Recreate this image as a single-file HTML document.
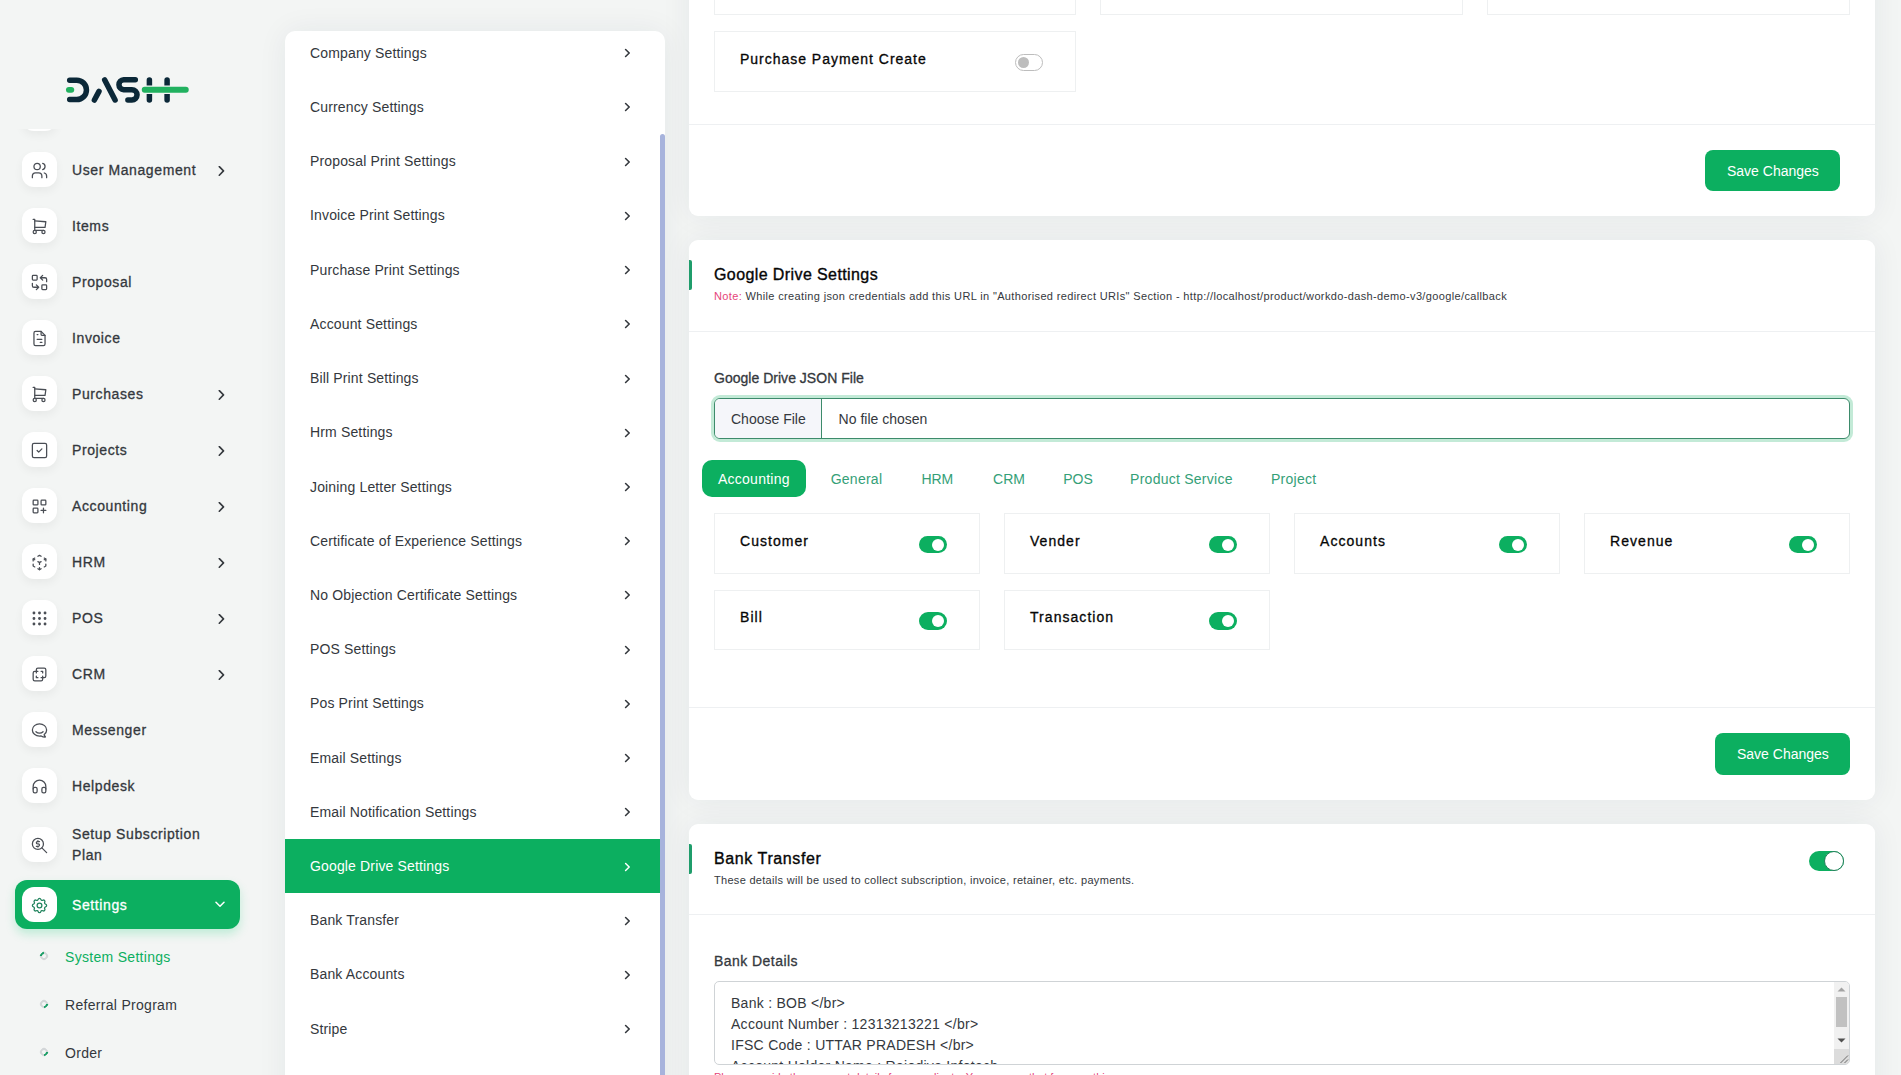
<!DOCTYPE html>
<html><head><meta charset="utf-8">
<style>
*{box-sizing:border-box;margin:0;padding:0}
html,body{width:1901px;height:1075px;overflow:hidden}
body{position:relative;background:#f3f5f4;font-family:"Liberation Sans",sans-serif;color:#293240;font-size:14px}
.abs{position:absolute}
/* sidebar */
.side{position:absolute;left:0;top:0;width:265px;height:1075px}
.mi{position:absolute;left:22px;width:240px;height:35px}
.ib{position:absolute;left:0;top:0;width:35px;height:35px;background:#fff;border-radius:12px;box-shadow:0 4px 10px rgba(0,0,0,0.05)}
.ib svg{position:absolute;left:8px;top:9.3px;width:19px;height:19px}
.mt{position:absolute;left:50px;top:0.8px;line-height:35px;font-size:14px;color:#34383d;-webkit-text-stroke:0.3px currentColor;letter-spacing:0.6px;white-space:nowrap}
.chev{position:absolute;left:196px;top:13.8px;width:7px;height:10px}
.sub{position:absolute;left:65px;font-size:14px;line-height:22px;color:#293240;letter-spacing:0.3px;white-space:nowrap}
.dot{position:absolute;left:40px;width:8px;height:8px;border-radius:50%;border:2px solid #d3d6d8;border-bottom-color:#1a9e66;transform:rotate(-45deg)}
/* middle card */
.mid{position:absolute;left:285px;top:31px;width:380px;height:1100px;background:#fff;border-radius:10px 10px 0 0;overflow:hidden;box-shadow:0 0 30px rgba(20,40,70,0.065)}
.it{position:absolute;left:0;width:375px;height:53.5px;line-height:55.5px;padding-left:25px;font-size:14px;color:#34383d;letter-spacing:0.15px;white-space:nowrap}
.it.act{background:#0caf60;color:#fff}
.it svg{position:absolute;left:338.8px;top:22.5px;width:7px;height:10px}
.sb{position:absolute;left:375px;top:103px;width:5px;height:1000px;background:#a7b3dc;border-radius:3px}
/* right cards */
.card{position:absolute;left:689px;width:1186px;background:#fff;border-radius:9px;box-shadow:0 0 30px rgba(20,40,70,0.065)}
.hr{position:absolute;left:0;width:100%;height:1px;background:#eef0f2}
.box{position:absolute;border:1px solid #eef0f1;background:#fff}
.lbl{position:absolute;font-weight:700;color:#060606;letter-spacing:0.5px;white-space:nowrap;font-size:14px}
.btn{position:absolute;background:#0caf60;color:#fff;border-radius:8px;text-align:center;font-size:14px;white-space:nowrap}
.tg{position:absolute;width:28px;height:17px;border-radius:9px;background:#0caf60}
.tg::after{content:"";position:absolute;right:3px;top:2.5px;width:12px;height:12px;border-radius:50%;background:#fff}
.accent{position:absolute;left:0;width:3px;height:30px;background:#1e9e6a;border-radius:0 2px 2px 0}
.ttl{position:absolute;left:24px;font-size:16px;font-weight:700;color:#060606;white-space:nowrap;letter-spacing:0.2px}
</style></head><body>
<!-- SIDEBAR -->

<div class="side">
<div class="abs" style="left:22px;top:96px;width:35px;height:35px;background:#fff;border-radius:12px;box-shadow:0 4px 10px rgba(0,0,0,0.05)"></div>
<div class="abs" style="left:0;top:0;width:265px;height:129px;background:#f3f5f4"></div>
<svg class="abs" style="left:0;top:0" width="265" height="130" viewBox="0 0 265 130">
<g fill="none" stroke-linecap="round" stroke-width="5.5">
<path d="M69.7 80.2 H76.75 A9.65 9.65 0 0 1 76.75 99.6 H69.7" stroke="#0b2838"/>
<path d="M68.9 89.85 H71.3" stroke="#21b15f" stroke-width="5.9"/>
<path d="M104.7 79.9 L115.1 100" stroke="#0b2838"/>
<path d="M99 91.4 L94.4 100" stroke="#0b2838"/>
<path d="M135.3 79.7 H123.7 A4.98 4.98 0 0 0 123.7 89.65 H131.9 A5.16 5.16 0 0 1 131.9 99.97 H127.9" stroke="#0b2838"/>
<path d="M149.4 79.9 V99.9 M167.1 79.9 V99.9" stroke="#0b2838"/>
<path d="M144.7 89.8 H185.8" stroke="#f3f5f4" stroke-width="8.6"/>
<path d="M144.7 89.8 H185.8" stroke="#21b15f" stroke-width="5.9"/>
</g>
</svg>
<div class="mi" style="top:152px"><div class="ib"><svg viewBox="0 0 24 24" fill="none" stroke="#4a4e55" stroke-width="1.6" stroke-linecap="round" stroke-linejoin="round" style="color:#454b58"><circle cx="9" cy="7" r="4"/><path d="M3 21v-2a4 4 0 0 1 4-4h4a4 4 0 0 1 4 4v2"/><path d="M16 3.13a4 4 0 0 1 0 7.75"/><path d="M21 21v-2a4 4 0 0 0-3-3.85"/></svg></div><div class="mt">User Management</div><svg class="chev" viewBox="0 0 7 10"><path d="M1.3 0.6 L5.5 4.9 L1.3 9.2" fill="none" stroke="#34383d" stroke-width="1.6" stroke-linecap="round" stroke-linejoin="round"/></svg></div>
<div class="mi" style="top:208px"><div class="ib"><svg viewBox="0 0 24 24" fill="none" stroke="#4a4e55" stroke-width="1.6" stroke-linecap="round" stroke-linejoin="round" style="color:#454b58"><circle cx="6" cy="19" r="2"/><circle cx="17" cy="19" r="2"/><path d="M17 17h-11v-14h-2"/><path d="M6 5l14 1l-1 7h-13"/></svg></div><div class="mt">Items</div></div>
<div class="mi" style="top:264px"><div class="ib"><svg viewBox="0 0 24 24" fill="none" stroke="#4a4e55" stroke-width="1.6" stroke-linecap="round" stroke-linejoin="round" style="color:#454b58"><rect x="3" y="3" width="6" height="6" rx="1"/><rect x="15" y="15" width="6" height="6" rx="1"/><path d="M21 11v-3a2 2 0 0 0-2-2h-6l3 3m0-6l-3 3"/><path d="M3 13v3a2 2 0 0 0 2 2h6l-3-3m0 6l3-3"/></svg></div><div class="mt">Proposal</div></div>
<div class="mi" style="top:320px"><div class="ib"><svg viewBox="0 0 24 24" fill="none" stroke="#4a4e55" stroke-width="1.6" stroke-linecap="round" stroke-linejoin="round" style="color:#454b58"><path d="M14 3v4a1 1 0 0 0 1 1h4"/><path d="M17 21h-10a2 2 0 0 1-2-2v-14a2 2 0 0 1 2-2h7l5 5v11a2 2 0 0 1-2 2z"/><path d="M9 7h1"/><path d="M9 13h6"/><path d="M13 17h2"/></svg></div><div class="mt">Invoice</div></div>
<div class="mi" style="top:376px"><div class="ib"><svg viewBox="0 0 24 24" fill="none" stroke="#4a4e55" stroke-width="1.6" stroke-linecap="round" stroke-linejoin="round" style="color:#454b58"><circle cx="6" cy="19" r="2"/><circle cx="17" cy="19" r="2"/><path d="M17 17h-11v-14h-2"/><path d="M6 5l14 1l-1 7h-13"/></svg></div><div class="mt">Purchases</div><svg class="chev" viewBox="0 0 7 10"><path d="M1.3 0.6 L5.5 4.9 L1.3 9.2" fill="none" stroke="#34383d" stroke-width="1.6" stroke-linecap="round" stroke-linejoin="round"/></svg></div>
<div class="mi" style="top:432px"><div class="ib"><svg viewBox="0 0 24 24" fill="none" stroke="#4a4e55" stroke-width="1.6" stroke-linecap="round" stroke-linejoin="round" style="color:#454b58"><rect x="3" y="3" width="18" height="18" rx="2"/><path d="M9 12l2 2l4-4"/></svg></div><div class="mt">Projects</div><svg class="chev" viewBox="0 0 7 10"><path d="M1.3 0.6 L5.5 4.9 L1.3 9.2" fill="none" stroke="#34383d" stroke-width="1.6" stroke-linecap="round" stroke-linejoin="round"/></svg></div>
<div class="mi" style="top:488px"><div class="ib"><svg viewBox="0 0 24 24" fill="none" stroke="#4a4e55" stroke-width="1.6" stroke-linecap="round" stroke-linejoin="round" style="color:#454b58"><rect x="4" y="4" width="6" height="6" rx="1"/><rect x="14" y="4" width="6" height="6" rx="1"/><rect x="4" y="14" width="6" height="6" rx="1"/><path d="M14 17h6m-3-3v6"/></svg></div><div class="mt">Accounting</div><svg class="chev" viewBox="0 0 7 10"><path d="M1.3 0.6 L5.5 4.9 L1.3 9.2" fill="none" stroke="#34383d" stroke-width="1.6" stroke-linecap="round" stroke-linejoin="round"/></svg></div>
<div class="mi" style="top:544px"><div class="ib"><svg viewBox="0 0 24 24" fill="none" stroke="#4a4e55" stroke-width="1.6" stroke-linecap="round" stroke-linejoin="round" style="color:#454b58"><path d="M6 17.6l-2-1.1v-2.5"/><path d="M4 10v-2.5l2-1.1"/><path d="M10 4.1l2-1.1l2 1.1"/><path d="M18 6.4l2 1.1v2.5"/><path d="M20 14v2.5l-2 1.12"/><path d="M14 19.9l-2 1.1l-2-1.1"/><path d="M12 12l2-1.1"/><path d="M18 8.6l2-1.1"/><path d="M12 12v2.5"/><path d="M12 18.5v2.5"/><path d="M12 12l-2-1.12"/><path d="M6 8.6l-2-1.1"/></svg></div><div class="mt">HRM</div><svg class="chev" viewBox="0 0 7 10"><path d="M1.3 0.6 L5.5 4.9 L1.3 9.2" fill="none" stroke="#34383d" stroke-width="1.6" stroke-linecap="round" stroke-linejoin="round"/></svg></div>
<div class="mi" style="top:600px"><div class="ib"><svg viewBox="0 0 24 24" fill="none" stroke="#4a4e55" stroke-width="1.6" stroke-linecap="round" stroke-linejoin="round" style="color:#454b58"><circle cx="5" cy="5" r="1" fill="currentColor"/><circle cx="12" cy="5" r="1" fill="currentColor"/><circle cx="19" cy="5" r="1" fill="currentColor"/><circle cx="5" cy="12" r="1" fill="currentColor"/><circle cx="12" cy="12" r="1" fill="currentColor"/><circle cx="19" cy="12" r="1" fill="currentColor"/><circle cx="5" cy="19" r="1" fill="currentColor"/><circle cx="12" cy="19" r="1" fill="currentColor"/><circle cx="19" cy="19" r="1" fill="currentColor"/></svg></div><div class="mt">POS</div><svg class="chev" viewBox="0 0 7 10"><path d="M1.3 0.6 L5.5 4.9 L1.3 9.2" fill="none" stroke="#34383d" stroke-width="1.6" stroke-linecap="round" stroke-linejoin="round"/></svg></div>
<div class="mi" style="top:656px"><div class="ib"><svg viewBox="0 0 24 24" fill="none" stroke="#4a4e55" stroke-width="1.6" stroke-linecap="round" stroke-linejoin="round" style="color:#454b58"><path d="M16 16v2a2 2 0 0 1-2 2h-8a2 2 0 0 1-2-2v-8a2 2 0 0 1 2-2h2v-2a2 2 0 0 1 2-2h8a2 2 0 0 1 2 2v8a2 2 0 0 1-2 2h-2"/><path d="M10 8l-2 0l0 2"/><path d="M8 14l0 2l2 0"/><path d="M14 8l2 0l0 2"/><path d="M16 14l0 2l-2 0"/></svg></div><div class="mt">CRM</div><svg class="chev" viewBox="0 0 7 10"><path d="M1.3 0.6 L5.5 4.9 L1.3 9.2" fill="none" stroke="#34383d" stroke-width="1.6" stroke-linecap="round" stroke-linejoin="round"/></svg></div>
<div class="mi" style="top:712px"><div class="ib"><svg viewBox="0 0 24 24" fill="none" stroke="#4a4e55" stroke-width="1.6" stroke-linecap="round" stroke-linejoin="round" style="color:#454b58"><path d="M17.802 17.292s.077-.055.2-.149c1.843-1.425 3-3.49 3-5.789c0-4.286-4.03-7.764-9-7.764c-4.97 0-9 3.478-9 7.764c0 4.288 4.03 7.646 9 7.646c.424 0 1.12-.028 2.088-.084c1.262.82 3.104 1.493 4.716 1.493c.499 0 .734-.41.414-.828c-.486-.596-1.156-1.551-1.416-2.29z"/><path d="M7.5 13.5c2.5 2.5 6.5 2.5 9 0"/></svg></div><div class="mt">Messenger</div></div>
<div class="mi" style="top:768px"><div class="ib"><svg viewBox="0 0 24 24" fill="none" stroke="#4a4e55" stroke-width="1.6" stroke-linecap="round" stroke-linejoin="round" style="color:#454b58"><rect x="4" y="13" width="5" height="7" rx="2"/><rect x="15" y="13" width="5" height="7" rx="2"/><path d="M4 15v-3a8 8 0 0 1 16 0v3"/></svg></div><div class="mt">Helpdesk</div></div>
<div class="mi" style="top:827px"><div class="ib"><svg viewBox="0 0 24 24" fill="none" stroke="#4a4e55" stroke-width="1.6" stroke-linecap="round" stroke-linejoin="round" style="color:#454b58"><circle cx="10" cy="10" r="7"/><path d="M21 21l-6-6"/><path d="M12 7h-2.5a1.5 1.5 0 0 0 0 3h1a1.5 1.5 0 0 1 0 3h-2.5"/><path d="M10 13v1m0-8v1"/></svg></div><div class="mt" style="line-height:21px;top:-3px">Setup Subscription<br>Plan</div></div>
<div class="abs" style="left:15px;top:880px;width:225px;height:49px;background:#0caf60;border-radius:12px;box-shadow:0 5px 10px rgba(40,210,130,0.25)"></div>
<div class="mi" style="top:887px"><div class="ib" style="box-shadow:none"><svg viewBox="0 0 24 24" fill="none" stroke="#23855f" stroke-width="1.6" stroke-linecap="round" stroke-linejoin="round" style="color:#23855f"><path d="M10.325 4.317c.426-1.756 2.924-1.756 3.35 0a1.724 1.724 0 0 0 2.573 1.066c1.543-.94 3.31.826 2.37 2.37a1.724 1.724 0 0 0 1.065 2.572c1.756.426 1.756 2.924 0 3.35a1.724 1.724 0 0 0-1.066 2.573c.94 1.543-.826 3.31-2.37 2.37a1.724 1.724 0 0 0-2.572 1.065c-.426 1.756-2.924 1.756-3.35 0a1.724 1.724 0 0 0-2.573-1.066c-1.543.94-3.31-.826-2.37-2.37a1.724 1.724 0 0 0-1.065-2.572c-1.756-.426-1.756-2.924 0-3.35a1.724 1.724 0 0 0 1.066-2.573c-.94-1.543.826-3.31 2.37-2.37c1 .608 2.296.07 2.572-1.065z"/><circle cx="12" cy="12" r="3"/></svg></div><div class="mt" style="color:#fff">Settings</div><svg class="chev" style="left:193px;top:14px;width:10px;height:7px" viewBox="0 0 10 7"><path d="M1 1.2 L5 5.2 L9 1.2" fill="none" stroke="#fff" stroke-width="1.5" stroke-linecap="round" stroke-linejoin="round"/></svg></div>
<div class="dot" style="transform:rotate(135deg);top:952px"></div><div class="sub" style="top:946px;color:#0caf60">System Settings</div>
<div class="dot" style="top:1000px"></div><div class="sub" style="top:994px;color:#34383d">Referral Program</div>
<div class="dot" style="top:1048px"></div><div class="sub" style="top:1042px;color:#34383d">Order</div>
</div>
<!-- MIDDLE -->
<div class="mid">
<div class="it" style="top:-5.25px">Company Settings<svg viewBox="0 0 7 10"><path d="M1.6 1.5 L5.2 5 L1.6 8.5" fill="none" stroke="#34383d" stroke-width="1.6" stroke-linecap="round" stroke-linejoin="round"/></svg></div>
<div class="it" style="top:48.97px">Currency Settings<svg viewBox="0 0 7 10"><path d="M1.6 1.5 L5.2 5 L1.6 8.5" fill="none" stroke="#34383d" stroke-width="1.6" stroke-linecap="round" stroke-linejoin="round"/></svg></div>
<div class="it" style="top:103.19px">Proposal Print Settings<svg viewBox="0 0 7 10"><path d="M1.6 1.5 L5.2 5 L1.6 8.5" fill="none" stroke="#34383d" stroke-width="1.6" stroke-linecap="round" stroke-linejoin="round"/></svg></div>
<div class="it" style="top:157.41px">Invoice Print Settings<svg viewBox="0 0 7 10"><path d="M1.6 1.5 L5.2 5 L1.6 8.5" fill="none" stroke="#34383d" stroke-width="1.6" stroke-linecap="round" stroke-linejoin="round"/></svg></div>
<div class="it" style="top:211.63px">Purchase Print Settings<svg viewBox="0 0 7 10"><path d="M1.6 1.5 L5.2 5 L1.6 8.5" fill="none" stroke="#34383d" stroke-width="1.6" stroke-linecap="round" stroke-linejoin="round"/></svg></div>
<div class="it" style="top:265.85px">Account Settings<svg viewBox="0 0 7 10"><path d="M1.6 1.5 L5.2 5 L1.6 8.5" fill="none" stroke="#34383d" stroke-width="1.6" stroke-linecap="round" stroke-linejoin="round"/></svg></div>
<div class="it" style="top:320.07px">Bill Print Settings<svg viewBox="0 0 7 10"><path d="M1.6 1.5 L5.2 5 L1.6 8.5" fill="none" stroke="#34383d" stroke-width="1.6" stroke-linecap="round" stroke-linejoin="round"/></svg></div>
<div class="it" style="top:374.29px">Hrm Settings<svg viewBox="0 0 7 10"><path d="M1.6 1.5 L5.2 5 L1.6 8.5" fill="none" stroke="#34383d" stroke-width="1.6" stroke-linecap="round" stroke-linejoin="round"/></svg></div>
<div class="it" style="top:428.51px">Joining Letter Settings<svg viewBox="0 0 7 10"><path d="M1.6 1.5 L5.2 5 L1.6 8.5" fill="none" stroke="#34383d" stroke-width="1.6" stroke-linecap="round" stroke-linejoin="round"/></svg></div>
<div class="it" style="top:482.73px">Certificate of Experience Settings<svg viewBox="0 0 7 10"><path d="M1.6 1.5 L5.2 5 L1.6 8.5" fill="none" stroke="#34383d" stroke-width="1.6" stroke-linecap="round" stroke-linejoin="round"/></svg></div>
<div class="it" style="top:536.95px">No Objection Certificate Settings<svg viewBox="0 0 7 10"><path d="M1.6 1.5 L5.2 5 L1.6 8.5" fill="none" stroke="#34383d" stroke-width="1.6" stroke-linecap="round" stroke-linejoin="round"/></svg></div>
<div class="it" style="top:591.17px">POS Settings<svg viewBox="0 0 7 10"><path d="M1.6 1.5 L5.2 5 L1.6 8.5" fill="none" stroke="#34383d" stroke-width="1.6" stroke-linecap="round" stroke-linejoin="round"/></svg></div>
<div class="it" style="top:645.39px">Pos Print Settings<svg viewBox="0 0 7 10"><path d="M1.6 1.5 L5.2 5 L1.6 8.5" fill="none" stroke="#34383d" stroke-width="1.6" stroke-linecap="round" stroke-linejoin="round"/></svg></div>
<div class="it" style="top:699.61px">Email Settings<svg viewBox="0 0 7 10"><path d="M1.6 1.5 L5.2 5 L1.6 8.5" fill="none" stroke="#34383d" stroke-width="1.6" stroke-linecap="round" stroke-linejoin="round"/></svg></div>
<div class="it" style="top:753.83px">Email Notification Settings<svg viewBox="0 0 7 10"><path d="M1.6 1.5 L5.2 5 L1.6 8.5" fill="none" stroke="#34383d" stroke-width="1.6" stroke-linecap="round" stroke-linejoin="round"/></svg></div>
<div class="it act" style="top:808.05px">Google Drive Settings<svg viewBox="0 0 7 10"><path d="M1.6 1.5 L5.2 5 L1.6 8.5" fill="none" stroke="#fff" stroke-width="1.5" stroke-linecap="round" stroke-linejoin="round"/></svg></div>
<div class="it" style="top:862.27px">Bank Transfer<svg viewBox="0 0 7 10"><path d="M1.6 1.5 L5.2 5 L1.6 8.5" fill="none" stroke="#34383d" stroke-width="1.6" stroke-linecap="round" stroke-linejoin="round"/></svg></div>
<div class="it" style="top:916.49px">Bank Accounts<svg viewBox="0 0 7 10"><path d="M1.6 1.5 L5.2 5 L1.6 8.5" fill="none" stroke="#34383d" stroke-width="1.6" stroke-linecap="round" stroke-linejoin="round"/></svg></div>
<div class="it" style="top:970.71px">Stripe<svg viewBox="0 0 7 10"><path d="M1.6 1.5 L5.2 5 L1.6 8.5" fill="none" stroke="#34383d" stroke-width="1.6" stroke-linecap="round" stroke-linejoin="round"/></svg></div>
<div class="it" style="top:1024.93px">Paypal<svg viewBox="0 0 7 10"><path d="M1.6 1.5 L5.2 5 L1.6 8.5" fill="none" stroke="#34383d" stroke-width="1.6" stroke-linecap="round" stroke-linejoin="round"/></svg></div>
<div class="sb"></div>
</div>
<!-- RIGHT -->
<div class="card" style="top:-300px;height:516px"></div>
<div class="box" style="left:714px;top:-50px;width:362px;height:65px"></div>
<div class="box" style="left:1100px;top:-50px;width:363px;height:65px"></div>
<div class="box" style="left:1487px;top:-50px;width:363px;height:65px"></div>
<div class="box" style="left:714px;top:31px;width:362px;height:61px"></div>
<div class="abs" style="left:740px;top:48.65px;line-height:20px;font-size:14px;-webkit-text-stroke:0.3px currentColor;color:#060606;letter-spacing:0.98px;white-space:nowrap;">Purchase Payment Create</div>
<div class="abs" style="left:1015px;top:54px;width:28px;height:17px;border-radius:9px;border:1px solid #bdbdbd;background:#fff"><div class="abs" style="left:2px;top:2px;width:11px;height:11px;border-radius:50%;background:#bdbdbd"></div></div>
<div class="abs" style="left:689px;top:124px;width:1186px;height:1px;background:#eef0f2"></div>
<div class="btn" style="left:1705px;top:150px;width:135px;height:41px"></div>
<div class="abs" style="left:1727px;top:160.75px;line-height:20px;font-size:14px;color:#fff;letter-spacing:0px;white-space:nowrap;">Save Changes</div>
<div class="card" style="top:240px;height:560px"></div>
<div class="abs" style="left:689px;top:260px;width:3px;height:30px;background:#1f9d6b;border-radius:0 2px 2px 0"></div>
<div class="abs" style="left:714px;top:264.66px;line-height:20px;font-size:16px;-webkit-text-stroke:0.35px currentColor;color:#060606;letter-spacing:0.4px;white-space:nowrap;">Google Drive Settings</div>
<div class="abs" style="left:714px;top:286.39px;line-height:20px;font-size:11px;color:#34383d;letter-spacing:0.36px;white-space:nowrap;"><span style="color:#e5457a">Note:</span> While creating json credentials add this URL in "Authorised redirect URIs" Section - http://localhost/product/workdo-dash-demo-v3/google/callback</div>
<div class="abs" style="left:689px;top:331px;width:1186px;height:1px;background:#eef0f2"></div>
<div class="abs" style="left:714px;top:368.15px;line-height:20px;font-size:14px;-webkit-text-stroke:0.3px currentColor;color:#34383d;letter-spacing:0.02px;white-space:nowrap;">Google Drive JSON File</div>
<div class="abs" style="left:711px;top:395px;width:1142px;height:47px;border-radius:9px;background:#c3ead7"></div>
<div class="abs" style="left:714px;top:398px;width:1136px;height:41px;border-radius:6px;border:1px solid #3d8b6b;background:#fff;overflow:hidden"><div class="abs" style="left:0;top:0;width:107px;height:39px;background:#f5f6fa;border-right:1px solid #3d8b6b"></div></div>
<div class="abs" style="left:731px;top:408.85px;line-height:20px;font-size:14px;color:#34383d;letter-spacing:0px;white-space:nowrap;">Choose File</div>
<div class="abs" style="left:838.6px;top:408.85px;line-height:20px;font-size:14px;color:#34383d;letter-spacing:0px;white-space:nowrap;">No file chosen</div>
<div class="abs" style="left:702px;top:460px;width:104px;height:37px;border-radius:10px;background:#0caf60"></div>
<div class="abs" style="left:718px;top:468.55px;line-height:20px;font-size:14px;color:#fff;letter-spacing:0.25px;white-space:nowrap;">Accounting</div>
<div class="abs" style="left:830.7px;top:468.55px;line-height:20px;font-size:14px;color:#34a077;letter-spacing:0.25px;white-space:nowrap;">General</div>
<div class="abs" style="left:921.4px;top:468.55px;line-height:20px;font-size:14px;color:#34a077;letter-spacing:0px;white-space:nowrap;">HRM</div>
<div class="abs" style="left:993.1px;top:468.55px;line-height:20px;font-size:14px;color:#34a077;letter-spacing:0px;white-space:nowrap;">CRM</div>
<div class="abs" style="left:1063.2px;top:468.55px;line-height:20px;font-size:14px;color:#34a077;letter-spacing:0px;white-space:nowrap;">POS</div>
<div class="abs" style="left:1130.1px;top:468.55px;line-height:20px;font-size:14px;color:#34a077;letter-spacing:0.25px;white-space:nowrap;">Product Service</div>
<div class="abs" style="left:1271px;top:468.55px;line-height:20px;font-size:14px;color:#34a077;letter-spacing:0.25px;white-space:nowrap;">Project</div>
<div class="box" style="left:714px;top:513px;width:266px;height:61px"></div>
<div class="abs" style="left:740px;top:530.75px;line-height:20px;font-size:14px;-webkit-text-stroke:0.3px currentColor;color:#060606;letter-spacing:1.05px;white-space:nowrap;">Customer</div>
<div class="abs" style="left:919px;top:536px;width:28px;height:17px;border-radius:8.5px;background:#0caf60"><div class="abs" style="right:3px;top:2.5px;width:12px;height:12px;border-radius:50%;background:#fff"></div></div>
<div class="box" style="left:1004px;top:513px;width:266px;height:61px"></div>
<div class="abs" style="left:1030px;top:530.75px;line-height:20px;font-size:14px;-webkit-text-stroke:0.3px currentColor;color:#060606;letter-spacing:1.05px;white-space:nowrap;">Vender</div>
<div class="abs" style="left:1209px;top:536px;width:28px;height:17px;border-radius:8.5px;background:#0caf60"><div class="abs" style="right:3px;top:2.5px;width:12px;height:12px;border-radius:50%;background:#fff"></div></div>
<div class="box" style="left:1294px;top:513px;width:266px;height:61px"></div>
<div class="abs" style="left:1320px;top:530.75px;line-height:20px;font-size:14px;-webkit-text-stroke:0.3px currentColor;color:#060606;letter-spacing:1.05px;white-space:nowrap;">Accounts</div>
<div class="abs" style="left:1499px;top:536px;width:28px;height:17px;border-radius:8.5px;background:#0caf60"><div class="abs" style="right:3px;top:2.5px;width:12px;height:12px;border-radius:50%;background:#fff"></div></div>
<div class="box" style="left:1584px;top:513px;width:266px;height:61px"></div>
<div class="abs" style="left:1610px;top:530.75px;line-height:20px;font-size:14px;-webkit-text-stroke:0.3px currentColor;color:#060606;letter-spacing:1.05px;white-space:nowrap;">Revenue</div>
<div class="abs" style="left:1789px;top:536px;width:28px;height:17px;border-radius:8.5px;background:#0caf60"><div class="abs" style="right:3px;top:2.5px;width:12px;height:12px;border-radius:50%;background:#fff"></div></div>
<div class="box" style="left:714px;top:590px;width:266px;height:60px"></div>
<div class="abs" style="left:740px;top:607.05px;line-height:20px;font-size:14px;-webkit-text-stroke:0.3px currentColor;color:#060606;letter-spacing:1.05px;white-space:nowrap;">Bill</div>
<div class="abs" style="left:919px;top:612px;width:28px;height:18px;border-radius:9.0px;background:#0caf60"><div class="abs" style="right:3px;top:3.0px;width:12px;height:12px;border-radius:50%;background:#fff"></div></div>
<div class="box" style="left:1004px;top:590px;width:266px;height:60px"></div>
<div class="abs" style="left:1030px;top:607.05px;line-height:20px;font-size:14px;-webkit-text-stroke:0.3px currentColor;color:#060606;letter-spacing:1.05px;white-space:nowrap;">Transaction</div>
<div class="abs" style="left:1209px;top:612px;width:28px;height:18px;border-radius:9.0px;background:#0caf60"><div class="abs" style="right:3px;top:3.0px;width:12px;height:12px;border-radius:50%;background:#fff"></div></div>
<div class="abs" style="left:689px;top:707px;width:1186px;height:1px;background:#eef0f2"></div>
<div class="btn" style="left:1715px;top:733px;width:135px;height:42px"></div>
<div class="abs" style="left:1737px;top:743.95px;line-height:20px;font-size:14px;color:#fff;letter-spacing:0px;white-space:nowrap;">Save Changes</div>
<div class="card" style="top:824px;height:400px"></div>
<div class="abs" style="left:689px;top:844px;width:3px;height:30px;background:#1f9d6b;border-radius:0 2px 2px 0"></div>
<div class="abs" style="left:714px;top:849.16px;line-height:20px;font-size:16px;-webkit-text-stroke:0.35px currentColor;color:#060606;letter-spacing:0.6px;white-space:nowrap;">Bank Transfer</div>
<div class="abs" style="left:714px;top:870.39px;line-height:20px;font-size:11px;color:#34383d;letter-spacing:0.3px;white-space:nowrap;">These details will be used to collect subscription, invoice, retainer, etc. payments.</div>
<div class="abs" style="left:1809px;top:851px;width:35px;height:20px;border-radius:10px;background:#0caf60"><div class="abs" style="right:0;top:0;width:20px;height:20px;border-radius:50%;background:#fff;border:1.5px solid #23805a"></div></div>
<div class="abs" style="left:689px;top:914px;width:1186px;height:1px;background:#eef0f2"></div>
<div class="abs" style="left:714px;top:950.95px;line-height:20px;font-size:14px;-webkit-text-stroke:0.3px currentColor;color:#34383d;letter-spacing:0.45px;white-space:nowrap;">Bank Details</div>
<div class="abs" style="left:714px;top:981px;width:1136px;height:84px;border-radius:5px;border:1px solid #cfd3d6;background:#fff;overflow:hidden"><div class="abs" style="left:16px;top:11px;line-height:21px;font-size:14px;color:#34383d;letter-spacing:0.27px;white-space:nowrap">Bank : BOB &lt;/br&gt;<br>Account Number : 12313213221 &lt;/br&gt;<br>IFSC Code : UTTAR PRADESH &lt;/br&gt;<br>Account Holder Name : Rajodiya Infotech</div><div class="abs" style="right:0;top:0;width:15px;height:67px;background:#f1f1f1"></div><div class="abs" style="right:0;top:67px;width:15px;height:15px;background:#dcdcdc"><svg class="abs" style="left:0;top:0" width="15" height="15" viewBox="0 0 15 15"><path d="M6.5 14 L14 6.5 M10.5 14 L14 10.5" stroke="#6b6b6b" stroke-width="1"/></svg></div><svg class="abs" style="right:0;top:0" width="15" height="67" viewBox="0 0 15 67"><path d="M3.5 9.5 L7.5 5.5 L11.5 9.5 Z" fill="#a3a3a3"/><path d="M3.5 56.5 L11.5 56.5 L7.5 60.5 Z" fill="#505050"/><rect x="2" y="15" width="11" height="30" fill="#c1c1c1"/></svg></div>
<div class="abs" style="left:714px;top:1066.99px;line-height:20px;font-size:11px;color:#e5457a;letter-spacing:0px;white-space:nowrap;">Please provide the payment details for your clients. You can see that for everything.</div>
</body></html>
